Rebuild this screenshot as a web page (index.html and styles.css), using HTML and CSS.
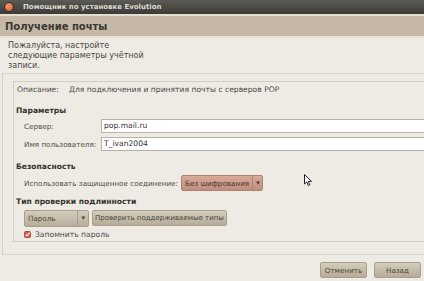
FILE: index.html
```html
<!DOCTYPE html>
<html lang="ru">
<head>
    <meta charset="UTF-8">
    <title>Помощник по установке Evolution</title>
    <link rel="stylesheet" href="styles.css">
</head>
<body>
    <div class="titlebar">
        <span class="close"></span>
        <span class="wintitle">Помощник по установке Evolution</span>
    </div>
    <div class="header">
        <h1 class="page-title">Получение почты</h1>
    </div>
    <p class="intro">Пожалуйста, настройте<br>следующие параметры учётной<br>записи.</p>

    <div class="outer">
        <div class="inner">
            <div class="desc">
                <span class="desc-label">Описание:</span>
                <span>Для подключения и принятия почты с серверов POP</span>
            </div>

            <div class="section">Параметры</div>
            <div class="field">
                <label class="field-label">Сервер:</label>
                <div class="entry">pop.mail.ru</div>
            </div>
            <div class="field">
                <label class="field-label">Имя пользователя:</label>
                <div class="entry">T_ivan2004</div>
            </div>

            <div class="section">Безопасность</div>
            <div class="row">
                <span class="row-label">Использовать защищенное соединение:</span>
                <div class="combo combo-red">
                    <span class="combo-text">Без шифрования</span>
                    <span class="combo-arrow">▾</span>
                </div>
            </div>

            <div class="section section-tight">Тип проверки подлинности</div>
            <div class="row row-auth">
                <div class="combo combo-auth">
                    <span class="combo-text">Пароль</span>
                    <span class="combo-arrow">▾</span>
                </div>
                <button class="btn btn-check">Проверить поддерживаемые типы</button>
            </div>
            <div class="check">
                <svg class="check-box" width="7" height="7" viewBox="0 0 7 7">
                    <rect x="0.5" y="0.5" width="6" height="6" rx="1" fill="#cf5c52" stroke="#b04a42"/>
                    <path d="M1.6 3.6 L3 5 L5.6 1.6" fill="none" stroke="#fff" stroke-width="1.1"/>
                </svg>
                <span>Запомнить пароль</span>
            </div>
        </div>
    </div>

    <div class="actions">
        <button class="btn btn-action">Отменить</button>
        <button class="btn btn-action">Назад</button>
    </div>

    <svg class="pointer" width="9" height="13" viewBox="0 0 9 13">
        <path d="M0.5 0.5 L0.5 10 L2.8 7.9 L4.3 11.5 L5.8 10.9 L4.3 7.4 L7.5 7.4 Z" fill="#fff" stroke="#222" stroke-width="1"/>
    </svg>
</body>
</html>
```

FILE: styles.css
```css
body{
    margin: 0;
    padding: 0;
    width: 424px;
    height: 281px;
    overflow: hidden;
    position: relative;
    background-color: #eeebe4;
    font-family: "DejaVu Sans", sans-serif;
    font-size: 7.2px;
    color: #3c3b37;
    white-space: nowrap;
}
.titlebar{
    height: 14px;
    display: flex;
    align-items: center;
    background: linear-gradient(#5c5a54, #3c3b37);
}
.close{
    width: 8px;
    height: 8px;
    margin-left: 4px;
    border-radius: 50%;
    background: radial-gradient(circle at 40% 35%, #f49a72, #d8522a);
    border: 1px solid #2e2d2a;
}
.wintitle{
    margin-left: 9px;
    font-weight: bold;
    font-size: 7px;
    color: #dfdbd2;
}
.header{
    height: 20px;
    border-top: 2px solid #e4dfd3;
    border-bottom: 2px solid #e8e2d7;
    background-color: #c6b8a6;
    display: flex;
    align-items: center;
}
.page-title{
    margin: 0 0 0 5px;
    font-size: 10px;
    font-weight: bold;
    color: #3a3833;
}
.intro{
    margin: 0;
    padding: 3px 0 0 8px;
    font-size: 8px;
    line-height: 10px;
    height: 29px;
    color: #4a4843;
}
.outer{
    margin: 3px -4px 0 2px;
    border: 1px solid #d9d4ca;
    padding: 7px 0 12px 10px;
}
.inner{
    border: 1px solid #d2ccc1;
    border-right: none;
    padding: 2px 0 1px 2px;
}
.desc{
    display: flex;
    height: 11px;
    align-items: center;
    font-size: 7.6px;
    color: #4a4843;
}
.desc-label{
    flex-shrink: 0;
    width: 52px;
    padding-left: 1px;
}
.section{
    font-weight: bold;
    margin-top: 10px;
    height: 12px;
    line-height: 12px;
    font-size: 7.6px;
    color: #35332f;
}
.section-tight{
    margin-top: 5px;
}
.field{
    display: flex;
    align-items: center;
    height: 14px;
    margin-top: 2px;
}
.field + .field{
    margin-top: 4px;
}
.field-label{
    flex-shrink: 0;
    width: 77px;
    padding-left: 8px;
    color: #4e4c47;
}
.entry{
    flex: 1;
    height: 12px;
    line-height: 12px;
    background-color: #fff;
    border: 1px solid #b8b2a6;
    padding-left: 2px;
    font-size: 7.6px;
    color: #35332f;
}
.row{
    display: flex;
    align-items: center;
    height: 16px;
    margin-top: 2px;
    padding-left: 8px;
}
.row-label{
    flex-shrink: 0;
    width: 157px;
    color: #4e4c47;
}
.combo{
    flex-shrink: 0;
    display: flex;
    align-items: center;
    height: 14px;
    border: 1px solid #a99f8c;
    border-radius: 2px;
    background: linear-gradient(#d4cdbc, #b7ae9a);
    color: #4a4639;
}
.combo-text{
    padding: 0 3px;
}
.combo-arrow{
    border-left: 1px solid #a89f8c;
    padding: 0 3px;
    font-size: 7px;
    height: 14px;
    line-height: 14px;
}
.combo-red{
    width: 80px;
    justify-content: space-between;
    border-color: #b08272;
    background: linear-gradient(#d8aa9a, #c08e7e);
    color: #4c362e;
}
.combo-red .combo-arrow{
    border-left-color: #b28676;
}
.combo-auth{
    width: 63px;
    height: 15px;
    justify-content: space-between;
}
.combo-auth .combo-arrow{
    height: 15px;
    line-height: 15px;
}
.row-auth{
    gap: 3px;
    margin-top: 2px;
}
.btn{
    flex-shrink: 0;
    font-family: "DejaVu Sans", sans-serif;
    font-size: 7.2px;
    height: 16px;
    padding: 0 3px;
    border: 1px solid #a99f8c;
    border-radius: 2px;
    background: linear-gradient(#d4cdbc, #b5ac98);
    color: #4a4639;
}
.btn-check{
    font-size: 7px;
    padding: 0 2px;
}
.check{
    display: flex;
    align-items: center;
    gap: 4px;
    height: 12px;
    margin-top: 2px;
    padding-left: 8px;
    font-size: 7.6px;
    color: #4e4c47;
}
.actions{
    display: flex;
    justify-content: flex-end;
    gap: 7px;
    margin-top: 7px;
    padding-right: 3px;
}
.btn-action{
    width: 47px;
    height: 16px;
}
.pointer{
    position: absolute;
    left: 304px;
    top: 174px;
}
```
